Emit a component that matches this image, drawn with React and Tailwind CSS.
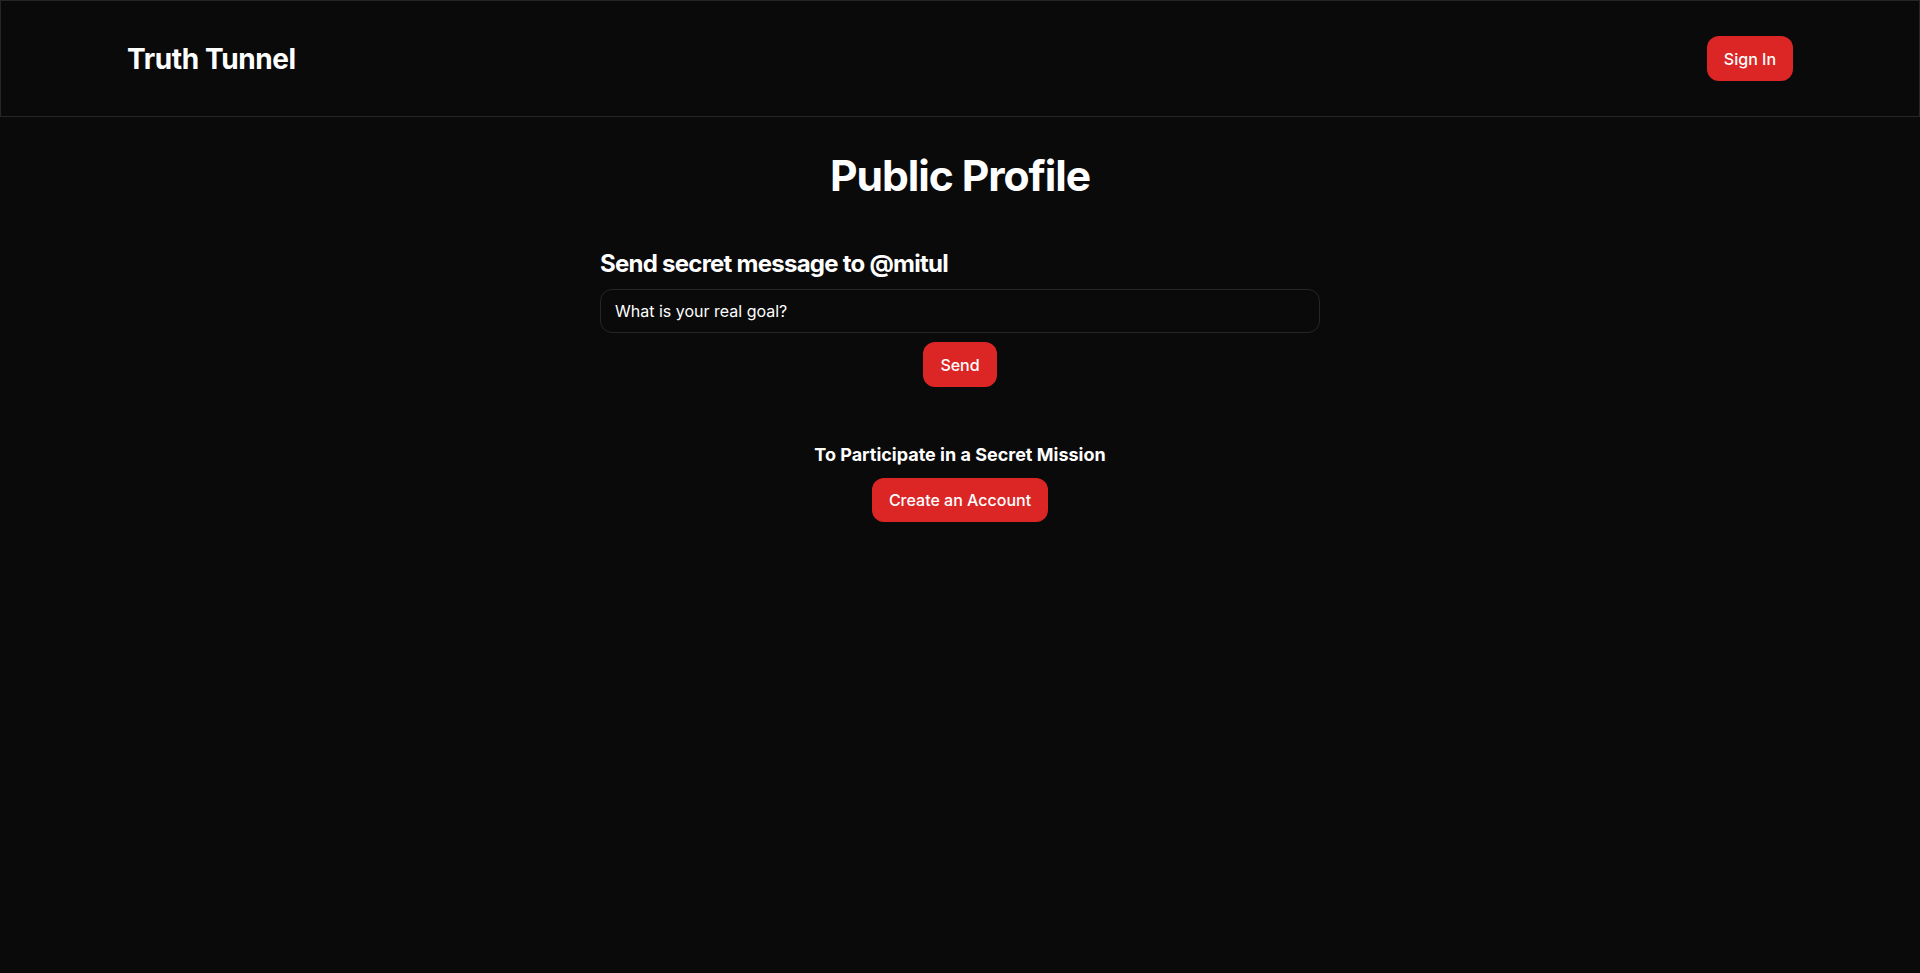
export default function App() {
  return (
    <div className="min-h-screen bg-[#0a0a0a] text-white" style={{ fontFamily: "Inter, 'Noto Sans', sans-serif" }}>
      <nav className="h-[117px] border border-[#262626] flex items-center justify-between pl-[126px] pr-[126px]">
        <a className="text-[28px] font-bold tracking-[-0.4px]">Truth Tunnel</a>
        <button className="h-[45px] px-[17px] rounded-xl bg-[#dc2626] text-base font-medium">Sign In</button>
      </nav>

      <main className="flex flex-col items-center pt-[34px]">
        <h1 className="text-[42.6px] leading-[50px] font-bold tracking-tight">Public Profile</h1>

        <div className="w-[720px] mt-[47px]">
          <h2 className="text-2xl leading-[32px] font-bold tracking-[-0.75px]">Send secret message to @mitul</h2>
          <input
            type="text"
            defaultValue="What is your real goal?"
            className="mt-[9px] w-full h-[44px] rounded-xl border border-[#262626] bg-transparent px-[14px] text-base outline-none"
          />
          <div className="flex justify-center mt-[9px]">
            <button className="h-[45px] px-[17px] rounded-xl bg-[#dc2626] text-base font-medium">Send</button>
          </div>
        </div>

        <div className="mt-[54px] flex flex-col items-center">
          <h3 className="text-lg font-bold">To Participate in a Secret Mission</h3>
          <button className="mt-[9px] h-[44px] px-[17px] rounded-xl bg-[#dc2626] text-base font-medium">Create an Account</button>
        </div>
      </main>
    </div>
  );
}
